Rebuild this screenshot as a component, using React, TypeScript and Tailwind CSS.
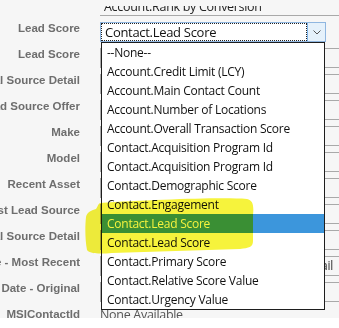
import React from 'react';

const labels = [
  'Lead Score',
  'Lead Score',
  'Original Source Detail',
  'Lead Source Offer',
  'Make',
  'Model',
  'Recent Asset',
  'First Lead Source',
  'Original Source Detail',
  'Lead Date - Most Recent',
  'Lead Date - Original',
  'MSIContactId',
];

const options = [
  '--None--',
  'Account.Credit Limit (LCY)',
  'Account.Main Contact Count',
  'Account.Number of Locations',
  'Account.Overall Transaction Score',
  'Contact.Acquisition Program Id',
  'Contact.Acquisition Program Id',
  'Contact.Demographic Score',
  'Contact.Engagement',
  'Contact.Lead Score',
  'Contact.Lead Score',
  'Contact.Primary Score',
  'Contact.Relative Score Value',
  'Contact.Urgency Value',
];

const selectedIndex = 9;

function Field({ index }: { index: number }) {
  if (index === 0) {
    return (
      <div className="flex h-[20px] w-[226px] border border-[#8fb6e0] bg-white">
        <div className="flex flex-1 items-center border border-dotted border-[#222] pl-[3px] text-[13px] leading-[18px] tracking-[-0.3px] text-[#111]">
          Contact.Lead Score
        </div>
        <div className="flex w-[18px] items-center justify-center border-l border-[#7eb4ea] bg-[#e5f1fb]">
          <svg width="8" height="5" viewBox="0 0 8 5">
            <polyline points="0.5,0.5 4,4 7.5,0.5" fill="none" stroke="#555" strokeWidth="1" />
          </svg>
        </div>
      </div>
    );
  }
  if (index === 11) {
    return <div className="-mt-[6px] flex h-[26px] items-center text-[12.5px] tracking-[-0.3px] text-[#555]">None Available</div>;
  }
  return (
    <div className="flex h-[20px] items-center justify-end overflow-hidden whitespace-nowrap border-y border-l border-[#a9a9a9] pr-[6px] text-[12px] tracking-[-0.25px] text-[#333]">
      {index === 9 ? 'Contact.Lead Source Detail' : ''}
    </div>
  );
}

export default function App() {
  return (
    <div className="relative h-[318px] w-[339px] overflow-hidden bg-[#f6f6f6] font-['Open_Sans',sans-serif]">
      {/* field cut off at the top */}
      <div className="flex h-[16px]">
        <div className="w-[100px]" />
        <div className="flex-1 border-b border-[#a9a9a9] pt-[6px]">
          <div className="h-[9px] overflow-hidden">
            <div className="-mt-[6px] whitespace-nowrap pl-[4px] text-[12.5px] leading-[13px] tracking-[-0.3px] text-[#222]">
              Account.Rank by Conversion
            </div>
          </div>
        </div>
      </div>

      {labels.map((label, i) => (
        <div key={i} className="flex h-[26px]">
          <div className="flex w-[80px] shrink-0 items-center justify-end overflow-hidden whitespace-nowrap font-['Liberation_Sans',Arial,sans-serif] text-[11.5px] font-bold text-[#6e6e6e]">
            {label}
          </div>
          <div className="ml-[20px] min-w-0 flex-1 pt-[6px]">
            <Field index={i} />
          </div>
        </div>
      ))}

      {/* open dropdown list */}
      <div className="absolute left-[101px] top-[42px] w-[224px] border border-[#1e1e1e] bg-white">
        {options.map((opt, i) => (
          <div
            key={i}
            className={
              i === selectedIndex
                ? 'flex h-[19px] items-center whitespace-nowrap bg-[#3c96dc] pl-[5px] text-[12px] tracking-[-0.25px] text-white'
                : 'flex h-[19px] items-center whitespace-nowrap pl-[5px] text-[12px] tracking-[-0.25px] text-[#111]'
            }
          >
            {opt}
          </div>
        ))}
      </div>

      {/* yellow highlighter mark */}
      <svg className="pointer-events-none absolute left-0 top-0 mix-blend-multiply" width="339" height="318">
        <path
          d="M100 203 C 150 200, 220 197, 247 199 C 253 200, 254 206, 253 215 L 253 241 C 253 247, 249 248, 240 249 L 112 253 C 100 254, 90 254, 87 250 C 85 240, 85 226, 86 217 C 87 212, 92 210, 96 209 C 98 206, 98 204, 100 203 Z"
          fill="#f6f33c"
        />
      </svg>
    </div>
  );
}
